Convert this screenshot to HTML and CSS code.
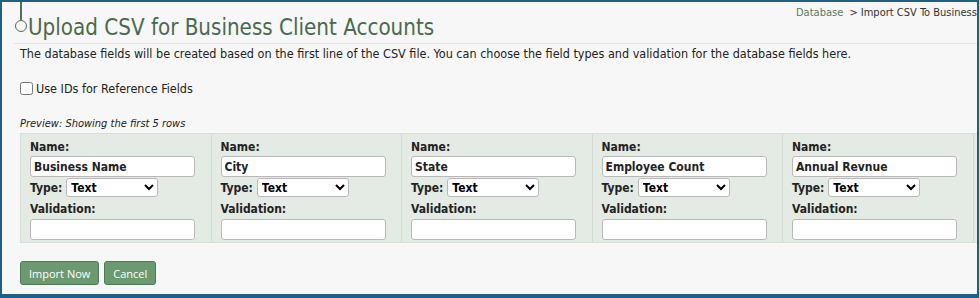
FILE: index.html
```html
<!DOCTYPE html>
<html lang="en">
<head>
  <meta charset="UTF-8">
  <title>Upload CSV for Business Client Accounts</title>
  <link rel="stylesheet" href="styles.css">
</head>
<body>
  <div class="frame">
    <div class="crumbs"><a href="#">Database</a> &gt; Import CSV To Business Client Accounts</div>
    <header class="page-head">
      <div class="node"><span class="stem"></span><span class="dot"></span></div>
      <h1>Upload CSV for Business Client Accounts</h1>
    </header>
    <p class="intro">The database fields will be created based on the first line of the CSV file. You can choose the field types and validation for the database fields here.</p>

    <label class="check"><input type="checkbox"> Use IDs for Reference Fields</label>

    <div class="preview-note">Preview: Showing the first 5 rows</div>
    <div class="fields">
      <div class="field">
        <div class="lbl">Name:</div>
        <input class="txt" value="Business Name">
        <div class="type-row"><span class="lbl">Type:</span>
          <select><option>Text</option><option>Number</option><option>Date</option></select></div>
        <div class="lbl val">Validation:</div>
        <input class="txt">
      </div>
      <div class="field">
        <div class="lbl">Name:</div>
        <input class="txt" value="City">
        <div class="type-row"><span class="lbl">Type:</span>
          <select><option>Text</option><option>Number</option><option>Date</option></select></div>
        <div class="lbl val">Validation:</div>
        <input class="txt">
      </div>
      <div class="field">
        <div class="lbl">Name:</div>
        <input class="txt" value="State">
        <div class="type-row"><span class="lbl">Type:</span>
          <select><option>Text</option><option>Number</option><option>Date</option></select></div>
        <div class="lbl val">Validation:</div>
        <input class="txt">
      </div>
      <div class="field">
        <div class="lbl">Name:</div>
        <input class="txt" value="Employee Count">
        <div class="type-row"><span class="lbl">Type:</span>
          <select><option>Text</option><option>Number</option><option>Date</option></select></div>
        <div class="lbl val">Validation:</div>
        <input class="txt">
      </div>
      <div class="field">
        <div class="lbl">Name:</div>
        <input class="txt" value="Annual Revnue">
        <div class="type-row"><span class="lbl">Type:</span>
          <select><option>Text</option><option>Number</option><option>Date</option></select></div>
        <div class="lbl val">Validation:</div>
        <input class="txt">
      </div>
    </div>

    <div class="actions">
      <button>Import Now</button>
      <button>Cancel</button>
    </div>
  </div>
</body>
</html>
```

FILE: styles.css
```css
* {
  box-sizing: border-box;
}
body {
  margin: 0;
  font-family: "DejaVu Sans Condensed", "DejaVu Sans", sans-serif;
  font-size: 12px;
  color: #222;
}
.frame {
  position: relative;
  width: 979px;
  height: 298px;
  overflow: hidden;
  background: #f7f7f7;
  border: 2px solid #1f5f83;
  border-bottom-width: 4px;
  padding: 0 0 0 18px;
}
.crumbs {
  position: absolute;
  top: 4px;
  left: 794px;
  white-space: nowrap;
  font-size: 11px;
  color: #333;
}
.crumbs a {
  color: #5b7a5e;
  text-decoration: none;
  margin-right: 3px;
}
.page-head {
  display: flex;
  align-items: flex-start;
  margin-left: -6px;
  border-bottom: 1px solid #e4e4e4;
  height: 42px;
}
.node {
  width: 14px;
  display: flex;
  flex-direction: column;
  align-items: center;
}
.stem {
  width: 2px;
  height: 18px;
  background: #4d7252;
}
.dot {
  width: 12px;
  height: 12px;
  border: 1.5px solid #4d7252;
  border-radius: 50%;
}
h1 {
  margin: 12px 0 0 0;
  font-family: "DejaVu Sans Condensed", "DejaVu Sans", sans-serif;
  font-weight: normal;
  font-size: 22.2px;
  line-height: 26px;
  color: #4a6a4e;
  white-space: nowrap;
}
.intro {
  margin: 2px 0 0 0;
  font-size: 12.5px;
}
.check {
  display: flex;
  align-items: center;
  gap: 3px;
  margin-top: 20px;
  font-size: 12.5px;
}
.check input {
  margin: 0;
  width: 13px;
  height: 13px;
}
.preview-note {
  margin-top: 21px;
  font-style: italic;
  font-size: 11px;
}
.fields {
  display: flex;
  width: 1150px;
  margin-top: 3px;
  background: #e4eae4;
  border: 1px solid #d6dcd6;
}
.field {
  width: 190.5px;
  flex: none;
  padding: 6px 9px 2px 9px;
  border-right: 1px solid #d3d9d3;
}
.lbl {
  font-weight: bold;
  font-size: 12px;
  line-height: 14px;
  color: #222;
}
.val {
  margin-top: 5px;
}
.txt {
  display: block;
  width: 165px;
  height: 21px;
  margin: 2px 0 0 0;
  padding: 1px 3px;
  border: 1px solid #b9b9b9;
  border-radius: 3px;
  background: #fff;
  font-family: inherit;
  font-weight: bold;
  font-size: 12px;
  color: #222;
}
.val + .txt {
  margin-top: 3px;
}
.type-row {
  display: flex;
  align-items: center;
  gap: 4px;
  height: 19px;
  margin-top: 1px;
}
select {
  width: 92px;
  height: 19px;
  font-family: inherit;
  font-weight: bold;
  font-size: 12px;
  border: 1px solid #b9b9b9;
  border-radius: 3px;
  background: #fff;
}
.actions {
  display: flex;
  gap: 5px;
  margin-top: 18px;
}
button {
  font-family: "Open Sans", sans-serif;
  font-size: 11px;
  color: #fff;
  background: #6b9a71;
  border: 1px solid #4f7c55;
  border-radius: 3px;
  padding: 0 8px;
  height: 24px;
}
```
